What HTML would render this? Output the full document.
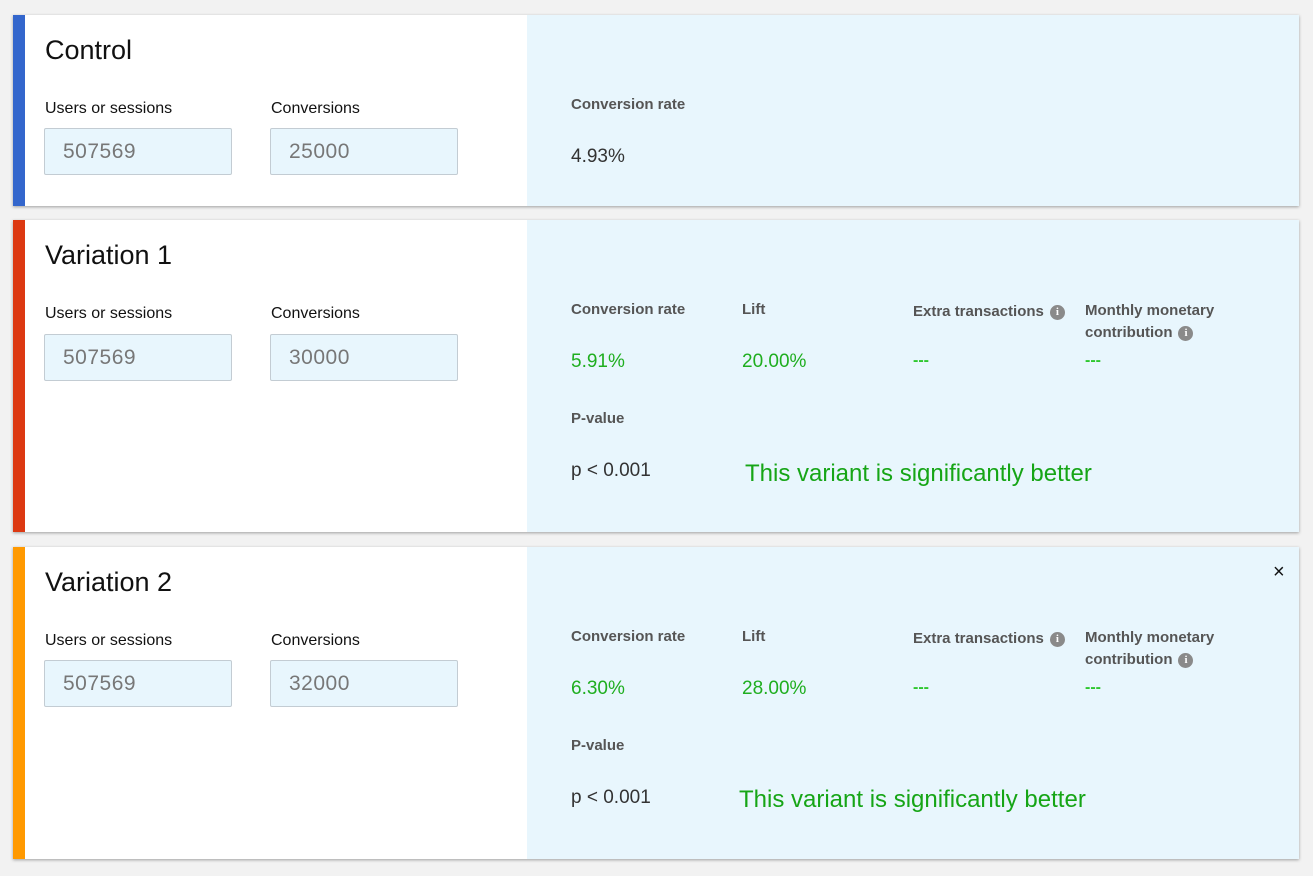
<!DOCTYPE html>
<html><head><style>
*{margin:0;padding:0;box-sizing:border-box}
body{width:1313px;height:876px;background:#f2f2f2;font-family:"Liberation Sans",Arial,sans-serif;position:relative;overflow:hidden}
.card{position:absolute;left:13px;width:1286px;background:#fff;box-shadow:0 1px 3px rgba(0,0,0,.35)}
.bar{position:absolute;left:0;top:0;bottom:0;width:12px}
.panel{position:absolute;left:514px;top:0;right:0;bottom:0;background:#e8f6fd}
.t{position:absolute;white-space:nowrap}
.h{font-size:27px;color:#111;left:32px}
.lbl{font-size:16px;color:#111}
.in{position:absolute;width:188px;height:47px;background:#e8f6fd;border:1px solid #c3ccd3;border-radius:2px;font-size:21px;color:#777;padding:11px 0 0 18px;letter-spacing:.5px}
.pl{font-size:15px;color:#555;font-weight:bold}
.v{font-size:19px;color:#333}
.g{color:#1fae1f}
.i{display:inline-block;width:15px;height:15px;border-radius:50%;background:#8a8a8a;color:#fff;font-size:11px;font-weight:bold;text-align:center;line-height:15px;vertical-align:1px;margin-left:6px;font-family:"Liberation Serif",serif}
.d{font-size:16px;color:#2ec72e;font-weight:bold}
.sig{font-size:24px;color:#16a516}
</style></head><body>

<div class="card" style="top:15px;height:191px">
<div class="bar" style="background:#3366cc"></div>
<div class="panel"></div>
<div class="t h" style="top:20px">Control</div>
<div class="t lbl" style="left:32px;top:85px">Users or sessions</div>
<div class="t lbl" style="left:258px;top:85px">Conversions</div>
<div class="in" style="left:31px;top:113px">507569</div>
<div class="in" style="left:257px;top:113px">25000</div>
<div class="t pl" style="left:558px;top:81px">Conversion rate</div>
<div class="t v" style="left:558px;top:131px">4.93%</div>
</div>

<div class="card" style="top:220px;height:312px">
<div class="bar" style="background:#dc3912"></div>
<div class="panel"></div>
<div class="t h" style="top:20px">Variation 1</div>
<div class="t lbl" style="left:32px;top:85px">Users or sessions</div>
<div class="t lbl" style="left:258px;top:85px">Conversions</div>
<div class="in" style="left:31px;top:114px">507569</div>
<div class="in" style="left:257px;top:114px">30000</div>
<div class="t pl" style="left:558px;top:81px">Conversion rate</div>
<div class="t pl" style="left:729px;top:81px">Lift</div>
<div class="t pl" style="left:900px;top:83px">Extra transactions<span class="i">i</span></div>
<div class="t pl" style="left:1072px;top:80px;line-height:22px">Monthly monetary<br>contribution<span class="i">i</span></div>
<div class="t v g" style="left:558px;top:131px">5.91%</div>
<div class="t v g" style="left:729px;top:131px">20.00%</div>
<div class="t d" style="left:900px;top:132px">---</div>
<div class="t d" style="left:1072px;top:132px">---</div>
<div class="t pl" style="left:558px;top:190px">P-value</div>
<div class="t v" style="left:558px;top:240px">p &lt; 0.001</div>
<div class="t sig" style="left:732px;top:240px">This variant is significantly better</div>
</div>

<div class="card" style="top:547px;height:312px">
<div class="bar" style="background:#ff9900"></div>
<div class="panel"></div>
<div class="t" style="left:1260px;top:14px;font-size:20px;color:#111">×</div>
<div class="t h" style="top:20px">Variation 2</div>
<div class="t lbl" style="left:32px;top:85px">Users or sessions</div>
<div class="t lbl" style="left:258px;top:85px">Conversions</div>
<div class="in" style="left:31px;top:113px">507569</div>
<div class="in" style="left:257px;top:113px">32000</div>
<div class="t pl" style="left:558px;top:81px">Conversion rate</div>
<div class="t pl" style="left:729px;top:81px">Lift</div>
<div class="t pl" style="left:900px;top:83px">Extra transactions<span class="i">i</span></div>
<div class="t pl" style="left:1072px;top:80px;line-height:22px">Monthly monetary<br>contribution<span class="i">i</span></div>
<div class="t v g" style="left:558px;top:131px">6.30%</div>
<div class="t v g" style="left:729px;top:131px">28.00%</div>
<div class="t d" style="left:900px;top:132px">---</div>
<div class="t d" style="left:1072px;top:132px">---</div>
<div class="t pl" style="left:558px;top:190px">P-value</div>
<div class="t v" style="left:558px;top:240px">p &lt; 0.001</div>
<div class="t sig" style="left:726px;top:239px">This variant is significantly better</div>
</div>

</body></html>
